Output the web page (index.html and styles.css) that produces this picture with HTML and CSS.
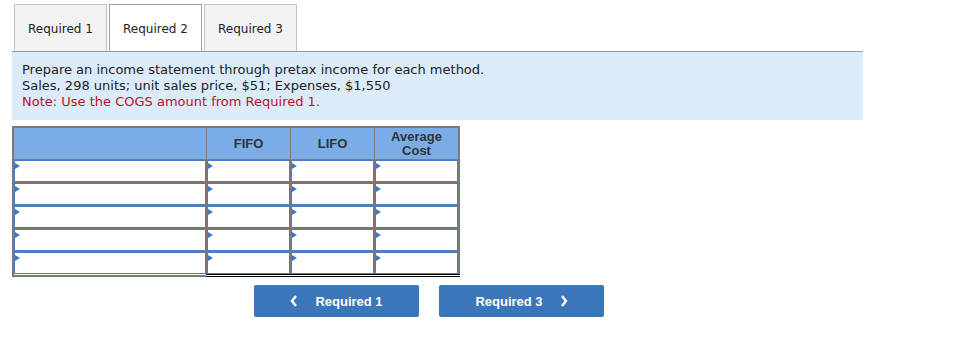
FILE: index.html
```html
<!DOCTYPE html>
<html lang="en">
<head>
    <meta charset="UTF-8">
    <meta name="viewport" content="width=device-width, initial-scale=1.0">
    <title>Required 2</title>
    <link rel="stylesheet" href="styles.css">
</head>
<body>

<div class="page">
    <div class="tabs">
        <div class="tab">Required 1</div>
        <div class="tab active">Required 2</div>
        <div class="tab">Required 3</div>
    </div>

    <div class="instructions">
        <p>Prepare an income statement through pretax income for each method.</p>
        <p>Sales, 298 units; unit sales price, $51; Expenses, $1,550</p>
        <p class="note">Note: Use the COGS amount from Required 1.</p>
    </div>

    <table class="answer">
        <thead>
            <tr>
                <th class="label-col"></th>
                <th>FIFO</th>
                <th>LIFO</th>
                <th>Average<br>Cost</th>
            </tr>
        </thead>
        <tbody>
            <tr>
                <td class="label-col"><div class="field"></div></td>
                <td><div class="field"></div></td>
                <td><div class="field"></div></td>
                <td><div class="field"></div></td>
            </tr>
            <tr>
                <td class="label-col"><div class="field"></div></td>
                <td><div class="field"></div></td>
                <td><div class="field"></div></td>
                <td><div class="field"></div></td>
            </tr>
            <tr>
                <td class="label-col"><div class="field"></div></td>
                <td><div class="field"></div></td>
                <td><div class="field"></div></td>
                <td><div class="field"></div></td>
            </tr>
            <tr>
                <td class="label-col"><div class="field"></div></td>
                <td><div class="field"></div></td>
                <td><div class="field"></div></td>
                <td><div class="field"></div></td>
            </tr>
            <tr class="total">
                <td class="label-col"><div class="field"></div></td>
                <td><div class="field"></div></td>
                <td><div class="field"></div></td>
                <td><div class="field"></div></td>
            </tr>
        </tbody>
    </table>

    <div class="nav">
        <button class="nav-btn">
            <svg width="8" height="12" viewBox="0 0 8 12"><polyline points="6,1 2,6 6,11" fill="none" stroke="#fff" stroke-width="2.4"/></svg>
            <span>Required 1</span>
        </button>
        <button class="nav-btn">
            <span>Required 3</span>
            <svg width="8" height="12" viewBox="0 0 8 12"><polyline points="2,1 6,6 2,11" fill="none" stroke="#fff" stroke-width="2.4"/></svg>
        </button>
    </div>
</div>

</body>
</html>
```

FILE: styles.css
```css
body {
    margin: 0;
    background-color: #fff;
    font-family: "DejaVu Sans", Verdana, sans-serif;
    color: #222;
}

.page {
    padding: 4px 0 0 12px;
}

/* tab strip */
.tabs {
    display: flex;
    gap: 2px;
    width: 849px;
    padding-left: 2px;
    border-bottom: 1px solid #999;
}

.tab {
    width: 91px;
    height: 46px;
    line-height: 48px;
    text-align: center;
    font-size: 12px;
    color: #222;
    background-color: #f2f2f2;
    border: 1px solid #c4c4c4;
    border-bottom: none;
}

.tab.active {
    background-color: #fff;
    border-color: #a0a0a0;
}

/* question text */
.instructions {
    width: 841px;
    padding: 10px 0 10px 10px;
    background-color: #dcebf9;
    font-size: 13px;
    line-height: 16px;
}

.instructions p {
    margin: 0;
}

.note {
    color: #c0102a;
}

/* answer grid */
.answer {
    margin-top: 6px;
    border-collapse: collapse;
    border: 2px solid #7a7a7a;
    table-layout: fixed;
    width: 446px;
}

.answer th {
    width: 83px;
    height: 31px;
    padding: 0;
    background-color: #7aade5;
    border: 1px solid #7a7a7a;
    font-family: "Liberation Sans", Arial, sans-serif;
    font-size: 13px;
    font-weight: bold;
    line-height: 14px;
    color: #333;
}

.answer th.label-col {
    width: 192px;
}

.answer td {
    padding: 0;
    border: 1px solid #7a7a7a;
}

.field {
    position: relative;
    height: 20px;
    background-color: #fff;
    border: 1px solid #4a7dbb;
}

.field::before {
    content: "";
    position: absolute;
    left: 0;
    top: 2px;
    border-left: 5px solid #3f78c2;
    border-top: 3px solid transparent;
    border-bottom: 3px solid transparent;
}

.total td {
    border-bottom: 3px double #000;
}

.total td.label-col {
    border-bottom: 2px solid #7a7a7a;
}

/* previous / next buttons */
.nav {
    display: flex;
    gap: 20px;
    margin: 8px 0 0 242px;
}

.nav-btn {
    display: flex;
    align-items: center;
    justify-content: center;
    gap: 17px;
    width: 165px;
    height: 32px;
    padding: 0;
    background-color: #3a76b9;
    border: none;
    border-radius: 2px;
    color: #fff;
    font-family: "Liberation Sans", Arial, sans-serif;
    font-size: 13px;
    font-weight: bold;
}
```
